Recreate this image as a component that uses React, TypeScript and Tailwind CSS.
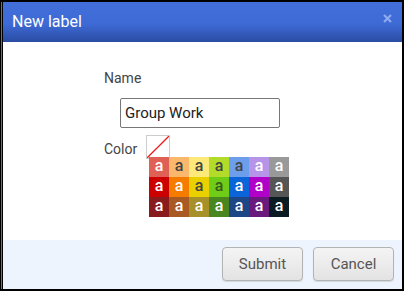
const swatches = [
  [
    { bg: 'bg-[#e06055]', fg: 'text-white' },
    { bg: 'bg-[#fbb76c]', fg: 'text-[#444]' },
    { bg: 'bg-[#fde97a]', fg: 'text-[#444]' },
    { bg: 'bg-[#b3dc2a]', fg: 'text-[#444]' },
    { bg: 'bg-[#6d9eeb]', fg: 'text-[#444]' },
    { bg: 'bg-[#b694e8]', fg: 'text-white' },
    { bg: 'bg-[#999999]', fg: 'text-white' },
  ],
  [
    { bg: 'bg-[#cc0000]', fg: 'text-white' },
    { bg: 'bg-[#f67c00]', fg: 'text-white' },
    { bg: 'bg-[#ebd000]', fg: 'text-[#444]' },
    { bg: 'bg-[#6fcc17]', fg: 'text-[#3a5a20]' },
    { bg: 'bg-[#0b64d8]', fg: 'text-white' },
    { bg: 'bg-[#b100c8]', fg: 'text-white' },
    { bg: 'bg-[#555555]', fg: 'text-white' },
  ],
  [
    { bg: 'bg-[#8a1b1d]', fg: 'text-white' },
    { bg: 'bg-[#a95a22]', fg: 'text-white' },
    { bg: 'bg-[#a6902a]', fg: 'text-white' },
    { bg: 'bg-[#4a861f]', fg: 'text-white' },
    { bg: 'bg-[#1c4686]', fg: 'text-white' },
    { bg: 'bg-[#6a1a7c]', fg: 'text-white' },
    { bg: 'bg-[#0c1a22]', fg: 'text-white' },
  ],
]

function FooterButton({ label }: { label: string }) {
  return (
    <button className="w-[81px] h-[34px] rounded-[4px] border border-[#b3b3b3] bg-[linear-gradient(#f4f4f4,#e3e3e3)] text-[15px] text-[#555] shadow-[0_1px_1px_rgba(0,0,0,0.12)]">
      {label}
    </button>
  )
}

export default function App() {
  return (
    <div className="w-[404px] h-[291px] bg-black pt-[2px] pr-[2px] pb-[2px] pl-px font-['Roboto',sans-serif]">
      <div className="h-full flex border-l border-[#707070] bg-black pl-px">
        <div className="flex-1 flex flex-col bg-white">
          <div className="h-[40px] shrink-0 flex items-center justify-between pl-[9px] pr-[10px] bg-[linear-gradient(#426fd9,#3d6ad5_55%,#2a4ca3)]">
            <span className="text-[16px] text-white">New label</span>
            <svg width="9" height="9" viewBox="0 0 9 9" className="mb-[8px]">
              <path d="M1 1L8 8M8 1L1 8" stroke="#8eaaf0" strokeWidth="2.2" />
            </svg>
          </div>

          <div className="flex-1 pl-[101px] pt-[26px]">
            <div className="text-[14px] leading-[20px] text-[#444]">Name</div>
            <input
              defaultValue="Group Work"
              className="mt-[10px] ml-[16px] block w-[160px] h-[30px] rounded-[2px] border border-[#777] px-[4px] text-[15px] text-[#222] outline-none"
            />
            <div className="mt-[6px] flex items-center gap-[9px]">
              <span className="text-[14px] leading-[20px] text-[#444] mt-[5px]">Color</span>
              <div className="w-[24px] h-[24px] border border-[#cccccc] bg-white">
                <svg width="22" height="22" viewBox="0 0 22 22">
                  <path d="M0 22L22 0" stroke="#ee1c1c" strokeWidth="1.3" />
                </svg>
              </div>
            </div>
            <div className="ml-[45px] mt-[-2px] grid grid-cols-[repeat(7,20px)] w-fit">
              {swatches.flat().map((s, i) => (
                <div
                  key={i}
                  className={`${s.bg} ${s.fg} h-[20px] flex items-center justify-center text-[16px] leading-none font-medium pb-[2px]`}
                >
                  a
                </div>
              ))}
            </div>
          </div>

          <div className="h-[49px] shrink-0 flex items-center justify-end gap-[10px] pr-[8px] pb-[1px] bg-[#edf4fd]">
            <FooterButton label="Submit" />
            <FooterButton label="Cancel" />
          </div>
        </div>
      </div>
    </div>
  )
}
